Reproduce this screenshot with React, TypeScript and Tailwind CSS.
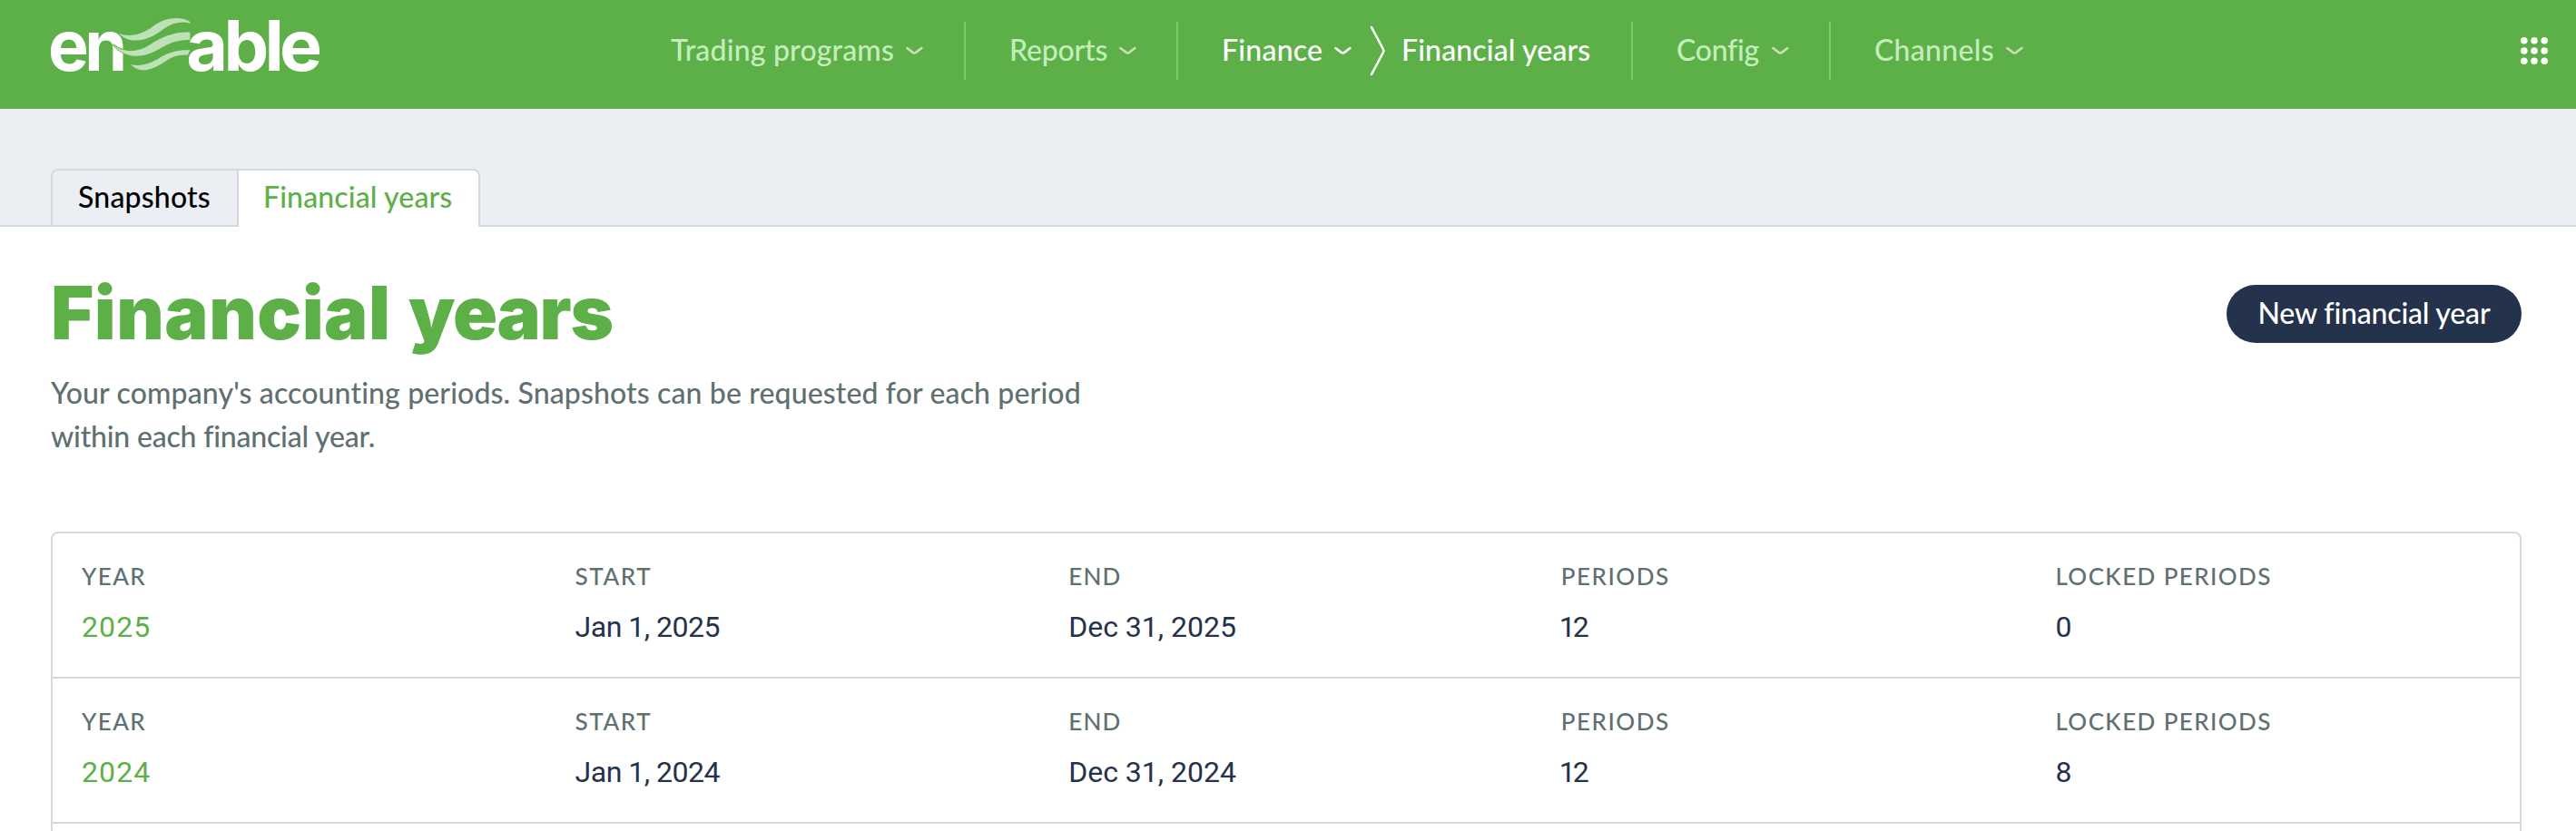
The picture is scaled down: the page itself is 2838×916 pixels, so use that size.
import type { ReactNode } from "react";

type Year = { year: string; start: string; end: string; periods: string; locked: string };

const years: Year[] = [
  { year: "2025", start: "Jan 1, 2025", end: "Dec 31, 2025", periods: "12", locked: "0" },
  { year: "2024", start: "Jan 1, 2024", end: "Dec 31, 2024", periods: "12", locked: "8" },
];

function Logo() {
  return (
    <svg
      className="mt-5 h-[59px] w-[296px] overflow-visible"
      viewBox="48 60 888 177"
      role="img"
      fontFamily="Inter, sans-serif"
      fontWeight="700"
      fontSize="233"
      letterSpacing="-14"
      fill="#fff"
    >
      <text x="39" y="233" textLength="248" lengthAdjust="spacingAndGlyphs">en</text>
      <g fill="#bfe1b8" stroke="#5db048" strokeWidth="5" paintOrder="stroke">
        <path d="M273 111C312 124 350 114 385 88C425 58 475 52 508 72V77C480 69 450 75 420 96C385 125 340 143 300 129C288 124 280 118 273 111Z" />
        <path d="M253 147C285 173 330 176 372 150C420 118 460 105 508 107V132C470 130 440 142 410 160C355 194 295 198 253 147Z" />
        <path d="M312 213C345 222 378 211 410 190C442 171 470 165 508 166L500 182C466 180 446 190 425 204C385 230 345 247 312 213Z" />
      </g>
      <text x="496" y="233" textLength="435" lengthAdjust="spacingAndGlyphs">able</text>
    </svg>
  );
}

function Chevron() {
  return (
    <svg className="h-[10px] w-[19px] shrink-0" viewBox="0 0 19 10" fill="none" stroke="currentColor" strokeWidth="2.6" strokeLinecap="round" strokeLinejoin="round">
      <path d="M1.4 2 L7.8 6.9 Q9.4 8 11 6.9 L17.4 2" />
    </svg>
  );
}

function NavItem({ children, className, active }: { children: ReactNode; className: string; active?: boolean }) {
  return (
    <a className={`flex items-center ${active ? "text-white" : "text-[#c5edbb]"}`}>
      <span className={`pb-0.5 whitespace-nowrap ${className}`}>{children}</span>
      <span className={`flex ${active ? "text-white" : "text-[#cadeb6]"}`}>
        <Chevron />
      </span>
    </a>
  );
}

function Divider({ className = "ml-11" }: { className?: string }) {
  return <span className={`mr-12 h-16 w-0.5 shrink-0 bg-[#74d061] ${className}`} />;
}

function Field({ label, spacing, children, link }: { label: string; spacing: string; children: ReactNode; link?: boolean }) {
  return (
    <div>
      <div className={`text-[26px] leading-8 font-medium text-[#5f7072] ${spacing}`}>{label}</div>
      <div className={`mt-5 font-['Roboto'] text-[32px] leading-10 font-[450] ${link ? "text-[#5db048] tracking-[1.1px]" : "text-[#24324c]"}`}>
        {children}
      </div>
    </div>
  );
}

export default function App() {
  return (
    <div className="h-[916px] w-full overflow-hidden bg-white font-['Lato',sans-serif] text-[32px] leading-[38px] font-medium">
      <header className="flex h-[120px] items-start bg-[#5db048] pl-14">
        <Logo />
        <nav className="ml-[387px] flex h-28 items-center">
          <NavItem className="w-[259px] tracking-[0.18px]">Trading programs</NavItem>
          <Divider className="ml-[45px]" />
          <NavItem className="w-[121px] tracking-[-0.2px]">Reports</NavItem>
          <Divider />
          <NavItem active className="w-[124px] tracking-[0.23px]">Finance</NavItem>
          <svg className="ml-5 h-14 w-[18px] shrink-0" viewBox="0 0 18 56" fill="none" stroke="#fff" strokeWidth="2.6" strokeLinecap="round" strokeLinejoin="round">
            <path d="M2 2 L14.8 26 Q15.8 28 14.8 30 L2 54" />
          </svg>
          <a className="ml-[17px] w-[253px] pb-0.5 tracking-[0.14px] text-white">Financial years</a>
          <Divider className="" />
          <NavItem className="w-[105px] tracking-[-0.28px]">Config</NavItem>
          <Divider />
          <NavItem className="w-[145px] tracking-[0.29px]">Channels</NavItem>
        </nav>
        <svg className="mt-[41px] mr-[31px] ml-auto h-[30px] w-[30px]" viewBox="0 0 30 30" fill="#fff">
          {[3.8, 15, 26.2].map((y) => [3.8, 15, 26.2].map((x) => <circle key={`${x}-${y}`} cx={x} cy={y} r="3.8" />))}
        </svg>
      </header>

      <div className="flex h-[130px] items-end border-b-2 border-[#d3d9dc] bg-[#ebeff4] pl-14">
        <div className="-mb-0.5 flex h-16 text-black">
          <a className="flex w-[205px] items-center rounded-tl-lg border-2 border-r-0 border-[#d3d9dc] pb-[3px] pl-7 tracking-[0.2px]">
            Snapshots
          </a>
          <a className="flex w-[268px] items-center rounded-tr-lg border-2 border-b-0 border-[#d3d9dc] bg-white pb-[5px] pl-[27px] tracking-[0.14px] text-[#5db048]">
            Financial years
          </a>
        </div>
      </div>

      <main className="pr-[60px] pl-14">
        <div className="flex items-start justify-between pt-[50px]">
          <div>
            <h1 className="font-['Inter'] text-[81px] leading-[90px] font-black tracking-[0.5px] text-[#5db048] [word-spacing:3px]">
              Financial <span className="tracking-[-1.3px]">years</span>
            </h1>
            <p className="mt-[19px] leading-[48px] text-[#5f7072]">
              <span className="block tracking-[0.13px]">Your company's accounting periods. Snapshots can be requested for each period</span>
              <span className="block tracking-[-0.2px]">within each financial year.</span>
            </p>
          </div>
          <button className="mt-[14px] flex h-16 w-[325px] items-center justify-center rounded-full bg-[#24324c] pb-[3px] tracking-[-0.18px] text-white">
            New financial year
          </button>
        </div>

        <div className="mt-[81px] h-[420px] rounded-lg border-2 border-[#d3d9dc]">
          {years.map((y) => (
            <div key={y.year} className="grid h-40 grid-cols-5 border-b-2 border-[#d3d9dc] pt-[31px]">
              <div className="pl-8">
                <Field label="YEAR" spacing="tracking-[1.4px]" link>{y.year}</Field>
              </div>
              <div className="pl-8">
                <Field label="START" spacing="tracking-[1.6px]"><span className="tracking-[-0.5px]">{y.start}</span></Field>
              </div>
              <div className="pl-8">
                <Field label="END" spacing="tracking-[1.2px]">{y.end}</Field>
              </div>
              <div className="pl-[31px]">
                <Field label="PERIODS" spacing="tracking-[1.5px]"><span className="-ml-0.5 tracking-[-3px]">{y.periods}</span></Field>
              </div>
              <div className="pl-8">
                <Field label="LOCKED PERIODS" spacing="tracking-[1.4px]">{y.locked}</Field>
              </div>
            </div>
          ))}
        </div>
      </main>
    </div>
  );
}
